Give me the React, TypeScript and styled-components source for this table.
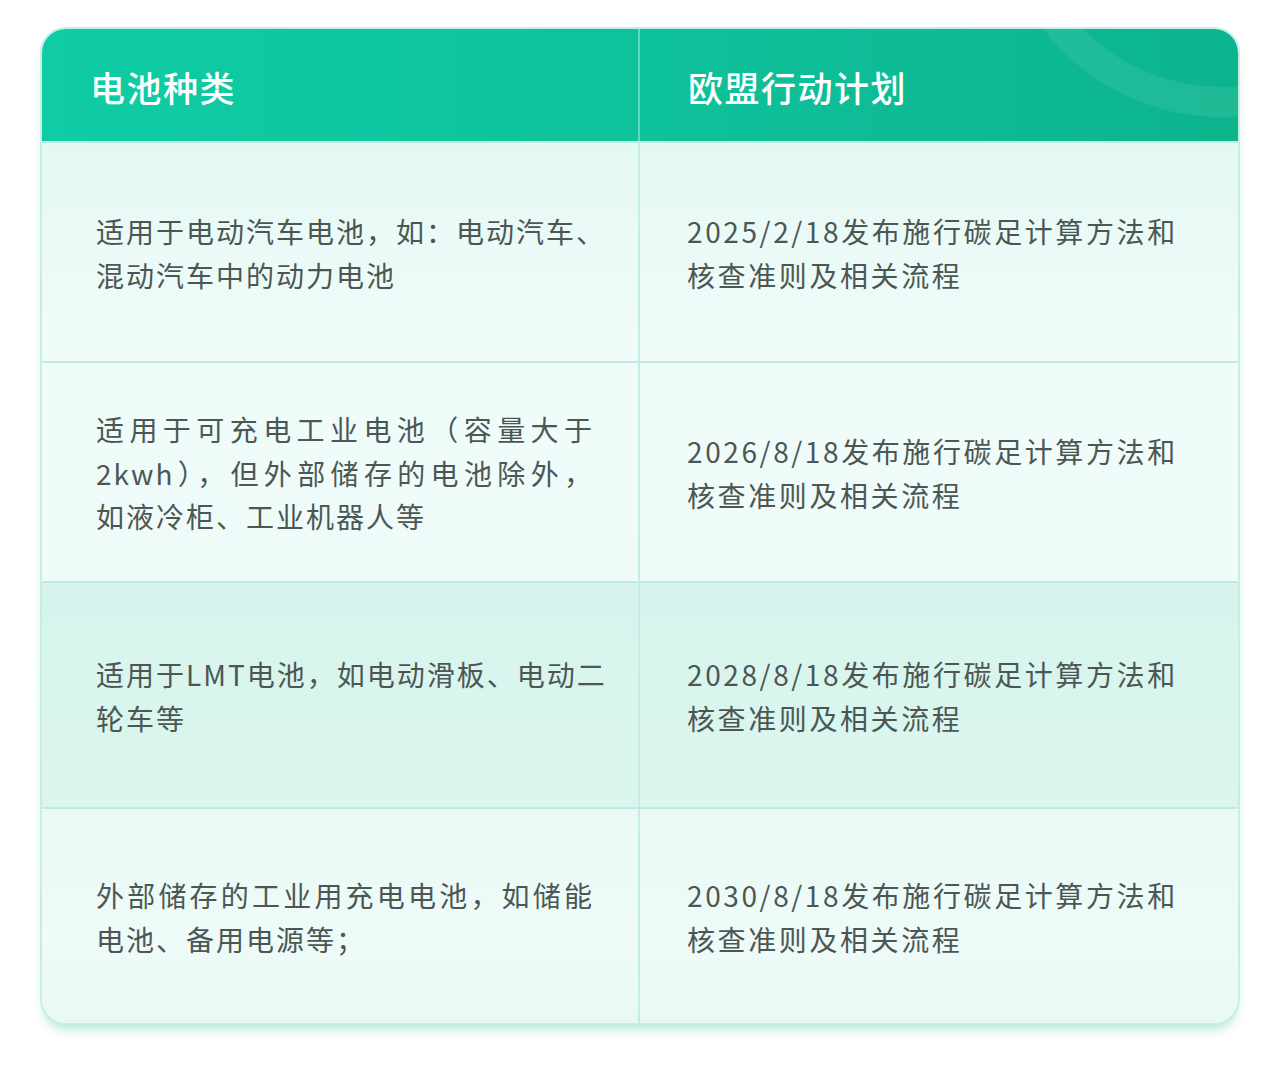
import React from 'react';
import styled, { createGlobalStyle } from 'styled-components';

const GlobalStyle = createGlobalStyle`
    html, body {
        margin: 0;
        padding: 0;
        background: #fff;
    }
    body {
        font-family: "Noto Sans CJK SC", "Noto Sans", sans-serif;
    }
`;

const Page = styled.div`
    width: 1280px;
    height: 1088px;
    padding: 27px 40px 0;
    box-sizing: border-box;
`;

const Card = styled.div`
    width: 1200px;
    box-sizing: border-box;
    border: 2px solid #c4efe3;
    border-radius: 26px;
    overflow: hidden;
    display: grid;
    grid-template-columns: 598px 1fr;
    box-shadow: 0 9px 12px -5px rgba(80, 195, 160, 0.45);
    background: #effbf9;
`;

const Header = styled.div`
    grid-column: 1 / -1;
    position: relative;
    height: 112px;
    display: grid;
    grid-template-columns: 598px 1fr;
    background: linear-gradient(90deg, #0fcca4 0%, #0ec39c 45%, #0cb48e 100%);
    overflow: hidden;
`;

const HeaderCell = styled.div<{ $first?: boolean }>`
    position: relative;
    z-index: 1;
    display: flex;
    align-items: center;
    padding-left: ${p => (p.$first ? '48px' : '48px')};
    border-right: ${p => (p.$first ? '2px solid #5fdcc0' : 'none')};
    color: #fff;
    font-size: 35px;
    font-weight: 500;
    letter-spacing: 1.5px;
    padding-top: 2px;
`;

const Ring = styled.svg`
    position: absolute;
    left: 0;
    top: 0;
    pointer-events: none;
`;

const Cell = styled.div<{ $first?: boolean; $h: number; $bg: string }>`
    height: ${p => p.$h}px;
    box-sizing: border-box;
    border-top: 2px solid #bfeadf;
    border-right: ${p => (p.$first ? '2px solid #c6ede3' : 'none')};
    background: ${p => p.$bg};
    display: flex;
    flex-direction: column;
    justify-content: center;
    padding-left: ${p => (p.$first ? '54px' : '47px')};
    padding-top: 3px;
    color: #4c5754;
    font-size: 28px;
    line-height: 43.5px;
    letter-spacing: ${p => (p.$first ? '2px' : '2.6px')};
`;

const Line = styled.div<{ $justify?: boolean }>`
    white-space: nowrap;
    width: ${p => (p.$justify ? '498px' : 'auto')};
    text-align: ${p => (p.$justify ? 'justify' : 'left')};
    text-align-last: ${p => (p.$justify ? 'justify' : 'auto')};
`;

type LineData = { text: string; justify?: boolean };

const rows: { h: number; bg: string; left: LineData[]; right: string[] }[] = [
    {
        h: 220,
        bg: 'linear-gradient(180deg, #e4f8f3 0%, #edfbf8 60%, #effcfa 100%)',
        left: [{ text: '适用于电动汽车电池，如：电动汽车、' }, { text: '混动汽车中的动力电池' }],
        right: ['2025/2/18发布施行碳足计算方法和', '核查准则及相关流程'],
    },
    {
        h: 220,
        bg: 'linear-gradient(180deg, #f0fcfa 0%, #effbf9 100%)',
        left: [
            { text: '适用于可充电工业电池（容量大于', justify: true },
            { text: '2kwh），但外部储存的电池除外，', justify: true },
            { text: '如液冷柜、工业机器人等' },
        ],
        right: ['2026/8/18发布施行碳足计算方法和', '核查准则及相关流程'],
    },
    {
        h: 226,
        bg: 'linear-gradient(180deg, #d6f4ed 0%, #dbf6ef 100%)',
        left: [{ text: '适用于LMT电池，如电动滑板、电动二' }, { text: '轮车等' }],
        right: ['2028/8/18发布施行碳足计算方法和', '核查准则及相关流程'],
    },
    {
        h: 216,
        bg: 'linear-gradient(180deg, #e9faf6 0%, #eefbf9 60%, #e8f9f5 100%)',
        left: [{ text: '外部储存的工业用充电电池，如储能', justify: true }, { text: '电池、备用电源等；' }],
        right: ['2030/8/18发布施行碳足计算方法和', '核查准则及相关流程'],
    },
];

const App = () => (
    <>
        <GlobalStyle />
        <Page>
            <Card>
                <Header>
                    <Ring width="1196" height="112" viewBox="0 0 1196 112">
                        <circle cx="1180" cy="-137" r="210" fill="none" stroke="rgba(255,255,255,0.08)" strokeWidth="30" />
                    </Ring>
                    <HeaderCell $first>电池种类</HeaderCell>
                    <HeaderCell>欧盟行动计划</HeaderCell>
                </Header>
                {rows.map((row, i) => (
                    <React.Fragment key={i}>
                        <Cell $first $h={row.h} $bg={row.bg}>
                            {row.left.map((l, j) => (
                                <Line key={j} $justify={l.justify}>{l.text}</Line>
                            ))}
                        </Cell>
                        <Cell $h={row.h} $bg={row.bg}>
                            {row.right.map((t, j) => (
                                <Line key={j}>{t}</Line>
                            ))}
                        </Cell>
                    </React.Fragment>
                ))}
            </Card>
        </Page>
    </>
);

export default App;
